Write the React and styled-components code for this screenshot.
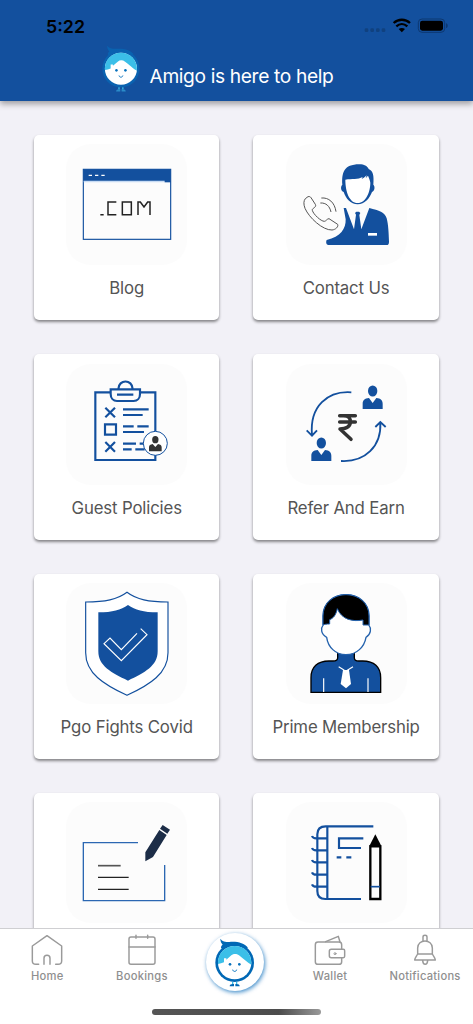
import React from 'react'
import styled, { createGlobalStyle } from 'styled-components'

const BLUE = '#13509e'

const GlobalStyle = createGlobalStyle`
    * {
        box-sizing: border-box;
    }

    body {
        margin: 0;
        background: #f2f1f7;
        font-family: Inter, "Liberation Sans", sans-serif;
    }
`

const Screen = styled.div`
    display: flex;
    flex-direction: column;
    height: 1024px;
    overflow: hidden;
    background: #f2f1f7;
`

const Header = styled.header`
    flex: none;
    height: 101px;
    background: ${BLUE};
    box-shadow: 0 3px 6px rgba(0, 0, 0, 0.35);
    z-index: 1;
`

const StatusBar = styled.div`
    display: flex;
    align-items: center;
    justify-content: space-between;
    height: 45px;
    padding: 7px 25px 0 46px;
`

const Clock = styled.span`
    font-size: 17.8px;
    font-weight: 600;
    color: #000;
`

const StatusIcons = styled.svg`
    display: block;
    width: 84px;
    height: 16px;
`

const TitleRow = styled.div`
    display: flex;
    padding-left: 102px;
`

const Title = styled.h1`
    margin: 19px 0 0 9px;
    font-size: 19.2px;
    font-weight: 400;
    line-height: 24px;
    letter-spacing: -0.36px;
    white-space: nowrap;
    color: #fff;
`

const Content = styled.main`
    flex: 1;
    min-height: 0;
    overflow: hidden;
    padding: 34px 34px 0;
`

const Grid = styled.div`
    display: grid;
    grid-template-columns: 185.4px 185.4px;
    grid-auto-rows: 185.3px;
    gap: 34px;
`

const Card = styled.div`
    display: flex;
    flex-direction: column;
    align-items: center;
    padding-top: 9.3px;
    background: #fff;
    border-radius: 5px;
    box-shadow: 0 2px 3px rgba(0, 0, 0, 0.45);
`

const Tile = styled.div`
    width: 121px;
    height: 121px;
    border-radius: 25px;
    background: #fcfcfc;
`

const TileArt = styled.svg`
    display: block;
    width: 121px;
    height: 121px;
`

const CardLabel = styled.span`
    margin-top: 12px;
    font-size: 16.8px;
    line-height: 22px;
    letter-spacing: -0.15px;
    white-space: nowrap;
    color: #555;
`

const TabBar = styled.nav`
    flex: none;
    display: grid;
    grid-template-columns: 94.6px 94.6px 92.4px 97px 93px;
    grid-template-rows: 80px 1fr;
    height: 96px;
    background: #fff;
    border-top: 1px solid #cfcfd2;
    z-index: 1;
`

const Tab = styled.div`
    display: flex;
    flex-direction: column;
    align-items: center;
    padding-top: 4.3px;
`

const TabArt = styled.svg`
    display: block;
    width: 34px;
    height: 34px;
    fill: none;
    stroke: #9a9a9a;
    stroke-width: 4.4;
    stroke-linecap: round;
    stroke-linejoin: round;
`

const TabLabel = styled.span`
    margin-top: 2px;
    font-size: 11.2px;
    font-weight: 450;
    line-height: 14px;
    letter-spacing: 0.24px;
    white-space: nowrap;
    color: #8f8f8f;
`

const AmigoBadge = styled.div`
    display: flex;
    justify-content: center;
    width: 58px;
    height: 58px;
    padding-top: 4.5px;
    border-radius: 50%;
    background: #fff;
    box-shadow: 1px 1.5px 4px rgba(0, 103, 184, 0.75);
`

const AmigoArt = styled.svg`
    display: block;
    width: ${props => props.$width}px;
    height: ${props => props.$height}px;
`

const HomeIndicator = styled.div`
    grid-column: 1 / -1;
    margin-left: 152px;
    width: 169px;
    height: 6px;
    border-radius: 3px;
    background: linear-gradient(90deg, #555 0%, #4c4c4c 75%, #999 100%);
`

const Amigo = ({ width, height, ring, feet }) => (
    <AmigoArt viewBox="645 70 120 148" preserveAspectRatio="none" $width={width} $height={height}>
        <path fill={ring} d="M661 72c6 8 14 10 27 10 24-2 44 3 56 17l-70 12-11-12c0-4 2-7 5-9-4-4-7-10-7-18z" />
        <circle cx="704" cy="144" r="58" fill={ring} />
        <circle cx="704" cy="144" r="50" fill="#fff" />
        <path fill="#3bbfe8" d="M654 148C652 116 676 94 704 94s52 21 50 56c-12-6-25-19-37-28-7-5-16-6-23 0l-15 13v-4h-7v12c-6 2-12 4-18 5z" />
        <circle cx="690" cy="149" r="4" fill="#0872bd" />
        <circle cx="718" cy="149" r="4" fill="#0872bd" />
        <path d="M698 165c1 7 11 7 12 0" fill="none" stroke="#0872bd" strokeWidth="3" />
        <path d="M698 202v7M710 202v7" stroke="#3bbfe8" strokeWidth="4" />
        <path d="M689 215c0-6 5-8 13-7v7zM719 215c0-6-5-8-13-7v7z" fill={feet} />
    </AmigoArt>
)

const BlogArt = () => (
    <TileArt viewBox="108 43 363 363">
        <rect x="160" y="119" width="262" height="210" fill="none" stroke={BLUE} strokeWidth="3.5" />
        <path d="M160 119h262v36H160z" fill={BLUE} />
        <path d="M161 155.500h243" stroke="#c8dcf4" strokeWidth="4" />
        <path d="M404 154h19v4h-19z" fill={BLUE} />
        <path d="M176 137h10M195 137h10M214 137h10" stroke="#fff" strokeWidth="3.500" />
        <path d="M211 255h10M259 217h-25v38h25M277 217h27v38h-27zM324 256v-39h7l11 15 11-15h7v39" fill="none" stroke="#222" strokeWidth="4.500" />
    </TileArt>
)

const ContactArt = () => (
    <TileArt viewBox="107 43 363 363">
        <path fill={BLUE} d="M276 165c-2-35 4-61 51-61 15 0 23 5 28 14 14 6 16 20 14 47 6 6 4 19-4 22-7 19-22 37-43 37s-36-18-42-37c-9-3-10-17-4-22z" />
        <path fill="#fff" d="M285 150c20-3 38 0 52-8l-3 6c8-3 12-8 15-11l-3 9 7-8c3 7 6 14 7 21 0 27-13 61-38 61s-37-34-37-70z" />
        <path fill={BLUE} d="M280 235h7l24 64 6-44-3-5 4-4h8l4 4-3 6 6 43 24-64c29 8 47 12 52 31 5 18 6 45 7 70 0 7-2 10-7 10H234c-6 0-8-9-5-15 42-9 58-34 57-62z" />
        <path d="M353 314h27" stroke="#fff" strokeWidth="8" />
        <path fill="none" stroke="#555" strokeWidth="3" strokeLinejoin="round" d="M165 207l8-6c4-1 7 0 9 3l13 20c2 4 1 6-2 9-4 4-8 4-7 9 3 12 26 33 36 33 5 0 8-8 14-8l26 17c3 7-6 16-17 17-28 1-69-37-81-65-5-13-4-23 1-29zM213 205c22-2 40 13 44 41M210 220c17-1 28 9 32 27" />
    </TileArt>
)

const PoliciesArt = () => (
    <TileArt viewBox="108 41 363 363">
        <g fill="none" stroke={BLUE} strokeWidth="6.500">
            <path d="M241 126h-45v203h180V126h-44" />
            <path d="M242 117h88v14c0 13-8 21-19 21h-50c-11 0-19-8-19-21zM265 116c1-30 42-30 43 0M261 133h49" />
            <path d="M226 172l29 29M255 172l-29 29M226 275l29 29M255 275l-29 29" />
            <path d="M225 222h33v31h-33zM279 177h77M279 194h59M279 228h32M322 228h34M279 245h63M279 280h39M329 280h15M279 297h26M316 297h28" />
        </g>
        <circle cx="376" cy="279" r="36" fill="#fff" stroke={BLUE} strokeWidth="3" />
        <ellipse cx="376" cy="268" rx="9.500" ry="11" fill="#333" />
        <path fill="#333" d="M357 303v-12c0-6 4-9 11-10l8 9 8-9c7 1 11 4 11 10v12z" />
    </TileArt>
)

const Person = ({ x, y }) => (
    <g transform={`translate(${x} ${y})`} fill={BLUE}>
        <ellipse cx="0" cy="0" rx="14" ry="16.500" />
        <path d="M-30 54v-16c0-10 6-16 19-17L0 36l11-15c13 1 19 7 19 17v16z" />
    </g>
)

const ReferArt = () => (
    <TileArt viewBox="107 41 363 363">
        <g fill="none" stroke={BLUE} strokeWidth="5.500">
            <path d="M303 126c-70-5-126 41-118 129M169 240l16 16 15-16" />
            <path d="M272 332c72 4 122-44 118-116M375 230l15-15 16 15" />
        </g>
        <Person x={367} y={122} />
        <Person x={213} y={278} />
        <path d="M268 196h47M268 215h47M279 196c19 0 21 10 21 19 0 13-9 20-31 21l33 31" fill="none" stroke="#333" strokeWidth="10.500" strokeLinecap="round" strokeLinejoin="round" />
    </TileArt>
)

const CovidArt = () => (
    <TileArt viewBox="108 39 363 363">
        <path d="M291 67c29 22 65 29 123 29v152c0 62-54 96-123 128-69-32-124-66-124-128V96c58 0 95-7 124-29z" fill="#fff" stroke={BLUE} strokeWidth="3.500" />
        <path d="M294 105c22 15 46 22 89 22v117c0 44-39 64-89 88-50-24-89-44-89-88V127c43 0 67-7 89-22z" fill={BLUE} />
        <path d="M321 190l-47 49-34-35-18 17 52 51 77-78-19-18" fill="none" stroke="#fff" strokeWidth="3.500" />
    </TileArt>
)

const MemberArt = () => (
    <TileArt viewBox="107 39 363 363">
        <path d="M262 250v13c0 7-4 10-14 10h-12c-34 0-54 18-54 50v44h209v-44c0-32-20-50-54-50h-12c-9 0-13-3-13-10v-13z" fill={BLUE} stroke="#000" strokeWidth="4" />
        <path d="M218 166v-28c0-39 31-64 69-64s69 25 69 64v28c7 8 7 27-9 36-5 29-28 52-60 52s-54-23-58-52c-18-9-18-28-11-36z" fill="#fff" stroke="#2462ad" strokeWidth="4" />
        <path d="M218 165v-27c0-39 31-64 69-64s69 25 69 64v27h-18v-15c-33 6-64-2-77-34-4 19-12 29-23 33v13c-10 0-15 1-20 3z" fill="#000" stroke="#2462ad" strokeWidth="3" />
        <path d="M220 325v41M353 325v41M265 290l17 11M308 290l-17 11" stroke="#fff" strokeWidth="3.500" />
        <path d="M278 300h18l6 42-15 13-16-13z" fill="#fff" />
    </TileArt>
)

const NoteArt = () => (
    <TileArt viewBox="108 51 363 363">
        <path d="M324 173H160v174h244V240" fill="none" stroke="#2b67b2" strokeWidth="4" />
        <path d="M204 242h68" stroke="#555" strokeWidth="5" />
        <path d="M204 277h92M204 313h92" stroke="#222" strokeWidth="4" />
        <path d="M398 120l22 14-8 12-22-15zM388 135l22 15-41 66-23 13v-27z" fill="#1c2d47" />
    </TileArt>
)

const BookArt = () => (
    <TileArt viewBox="107 51 363 363">
        <g fill="none" stroke={BLUE} strokeWidth="6.500">
            <path d="M369 124H226c-16 0-25 9-25 24v170c0 15 9 24 24 24h107M231 124v218" />
            <path d="M339 160h-73v29h66M259 217h14M288 217h15" />
            <path d="M185 153c2 6 6 7 13 7h32M185 189c2 6 6 7 13 7h32M185 225c2 6 6 7 13 7h32M185 262c2 6 6 7 13 7h32M185 298c2 6 6 7 13 7h32" />
        </g>
        <path d="M360 184h30v158h-30z" fill="#fcfcfc" stroke="#000" strokeWidth="7" />
        <path d="M357 183l18-35 18 35z" fill="#000" />
        <path d="M361 305h28" stroke={BLUE} strokeWidth="5" />
    </TileArt>
)

// the last row is cut off by the tab bar, so it carries no label
const cards = [
    { id: 'blog', label: 'Blog', Art: BlogArt },
    { id: 'contact', label: 'Contact Us', Art: ContactArt },
    { id: 'policies', label: 'Guest Policies', Art: PoliciesArt },
    { id: 'refer', label: 'Refer And Earn', Art: ReferArt },
    { id: 'covid', label: 'Pgo Fights Covid', Art: CovidArt },
    { id: 'member', label: 'Prime Membership', Art: MemberArt },
    { id: 'note', Art: NoteArt },
    { id: 'book', Art: BookArt }
]

const App = () => {
    return (
        <Screen>
            <GlobalStyle />
            <Header>
                <StatusBar>
                    <Clock>5:22</Clock>
                    <StatusIcons viewBox="1092 55 252 48">
                        <g fill="#10417f">
                            <rect x="1094" y="86" width="11" height="11" rx="4" />
                            <rect x="1111" y="86" width="11" height="11" rx="4" />
                            <rect x="1128" y="86" width="11" height="11" rx="4" />
                            <rect x="1145" y="86" width="11" height="11" rx="4" />
                        </g>
                        <path d="M1181 70c14-13 35-13 49 0M1189 80c10-9 23-9 33 0" fill="none" stroke="#000" strokeWidth="7" />
                        <path d="M1196 88c6-4 13-4 19 0l-9.500 10z" fill="#000" />
                        <rect x="1255" y="58" width="79" height="40" rx="11" fill="none" stroke="#0d3871" strokeWidth="3" />
                        <rect x="1260" y="63" width="69" height="30" rx="7" fill="#000" />
                        <path d="M1338 71c7 2 7 12 0 14z" fill="#0d3871" />
                    </StatusIcons>
                </StatusBar>
                <TitleRow>
                    <Amigo width={38.5} height={47.5} ring="#0a62b0" feet="#2b8bc9" />
                    <Title>Amigo is here to help</Title>
                </TitleRow>
            </Header>
            <Content>
                <Grid>
                    {cards.map(({ id, label, Art }) => (
                        <Card key={id}>
                            <Tile><Art /></Tile>
                            {label && <CardLabel>{label}</CardLabel>}
                        </Card>
                    ))}
                </Grid>
            </Content>
            <TabBar>
                <Tab>
                    <TabArt viewBox="91 55 102 102">
                        <path d="M117 149h-8c-7 0-11-4-11-10V94l44-31 44 31v45c0 6-4 10-11 10h-7M133 149v-18c0-12 18-12 18 0v18" />
                    </TabArt>
                    <TabLabel>Home</TabLabel>
                </Tab>
                <Tab>
                    <TabArt viewBox="376 55 102 102">
                        <rect x="388" y="67" width="78" height="82" rx="6" />
                        <path d="M388 97h78M409 62v9M444 62v9" />
                    </TabArt>
                    <TabLabel>Bookings</TabLabel>
                </Tab>
                <Tab>
                    <AmigoBadge>
                        <Amigo width={40} height={49.3} ring="#0068b5" feet="#0068b5" />
                    </AmigoBadge>
                </Tab>
                <Tab>
                    <TabArt viewBox="940 55 102 102">
                        <path d="M1026 103V90c0-5-3-8-8-8h-63c-5 0-8 3-8 8v51c0 5 3 8 8 8h63c5 0 8-3 8-8v-10" />
                        <path d="M978 81l38-16 5 17M995 104h36c3 0 4 1 4 4v17c0 3-1 4-4 4h-36c-4 0-6-2-6-6v-13c0-4 2-6 6-6z" />
                        <circle cx="1006" cy="117" r="3" strokeWidth="3" />
                    </TabArt>
                    <TabLabel>Wallet</TabLabel>
                </Tab>
                <Tab>
                    <TabArt viewBox="1224 55 102 102">
                        <path d="M1269 79V67c0-7 12-7 12 0v12M1253 118v-18c0-28 44-28 44 0v18M1253 118h44c4 8 8 10 9 18h-62c1-8 5-10 9-18zM1268 138c1 14 14 14 15 0" />
                    </TabArt>
                    <TabLabel>Notifications</TabLabel>
                </Tab>
                <HomeIndicator />
            </TabBar>
        </Screen>
    )
}

export default App
